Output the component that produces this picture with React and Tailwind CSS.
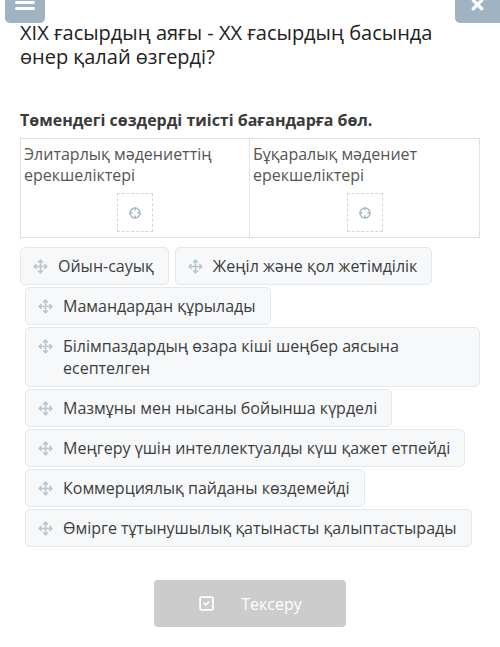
import { Move, Crosshair, SquareCheck, X } from "lucide-react";

const groups = [
  { head: ["Элитарлық мәдениеттің", "ерекшеліктері"] },
  { head: ["Бұқаралық мәдениет", "ерекшеліктері"] },
];

const rows = [
  "Мамандардан құрылады",
  "Білімпаздардың өзара кіші шеңбер аясына есептелген",
  "Мазмұны мен нысаны бойынша күрделі",
  "Меңгеру үшін интеллектуалды күш қажет етпейді",
  "Коммерциялық пайданы көздемейді",
  "Өмірге тұтынушылық қатынасты қалыптастырады",
];

function Chip({ text, className = "" }) {
  return (
    <div
      className={`flex items-start gap-[10px] rounded-[5px] border border-[#e3e8ec] bg-[#f6f8fa] pl-[12px] pr-[14px] py-[7px] text-[16px] leading-[22px] text-[#3d3d3d] ${className}`}
    >
      <Move className="mt-[4px] h-[15px] w-[15px] shrink-0 text-[#b8c6ce]" strokeWidth={2.5} />
      <span>{text}</span>
    </div>
  );
}

export default function App() {
  return (
    <div className="relative h-[647px] w-[500px] overflow-hidden bg-white font-['Open_Sans',sans-serif]">
      {/* top toolbar buttons */}
      <div className="absolute left-[5px] top-0 flex h-[23px] w-[40px] flex-col items-center gap-[3px] rounded-b-[5px] bg-[#9fb3c3] pt-[1px]">
        <div className="h-[3px] w-[20px] rounded-sm bg-white" />
        <div className="h-[3px] w-[20px] rounded-sm bg-white" />
      </div>
      <div className="absolute right-0 top-0 flex h-[23px] w-[45px] justify-center overflow-hidden rounded-bl-[5px] bg-[#9fb3c3]">
        <X className="-mt-[4px] h-[17px] w-[17px] text-white" strokeWidth={4.5} />
      </div>

      <div className="px-[20px] pt-[21px]">
        <h1 className="text-[20px] leading-[24px] text-[#222]">
          XIX ғасырдың аяғы - XX ғасырдың басында
          <br />
          өнер қалай өзгерді?
        </h1>

        <p className="mt-[41px] text-[16px] font-bold leading-[20px] text-[#3a3a3a]">
          Төмендегі сөздерді тиісті бағандарға бөл.
        </p>

        <div className="mt-[8px] grid h-[100px] grid-cols-2 border border-[#e2e2e2]">
          {groups.map((g, i) => (
            <div
              key={i}
              className={`flex flex-col px-[3px] pt-[5px] ${i === 0 ? "border-r border-[#e2e2e2]" : ""}`}
            >
              <div className="text-[16px] leading-[21px] text-[#555]">
                {g.head[0]}
                <br />
                {g.head[1]}
              </div>
              <div className="mt-[7px] flex h-[39px] w-[36px] items-center justify-center self-center border border-dashed border-[#d6d6d6]">
                <Crosshair className="h-[12px] w-[12px] text-[#a9b9c2]" strokeWidth={3} />
              </div>
            </div>
          ))}
        </div>

        <div className="mt-[9px] flex gap-[6px]">
          <Chip text="Ойын-сауық" />
          <Chip text="Жеңіл және қол жетімділік" />
        </div>

        <div className="mt-[2px] flex flex-col items-start gap-[2px] pl-[5px]">
          {rows.map((r, i) => (
            <Chip key={i} text={r} className={i === 1 ? "w-full" : ""} />
          ))}
        </div>

        <div className="mt-[33px] flex justify-center">
          <button className="flex h-[47px] w-[192px] items-center justify-center gap-[26px] rounded-[4px] bg-[#cccccc] text-[16px] text-white">
            <SquareCheck className="h-[17px] w-[17px]" strokeWidth={2.5} />
            <span>Тексеру</span>
          </button>
        </div>
      </div>
    </div>
  );
}
